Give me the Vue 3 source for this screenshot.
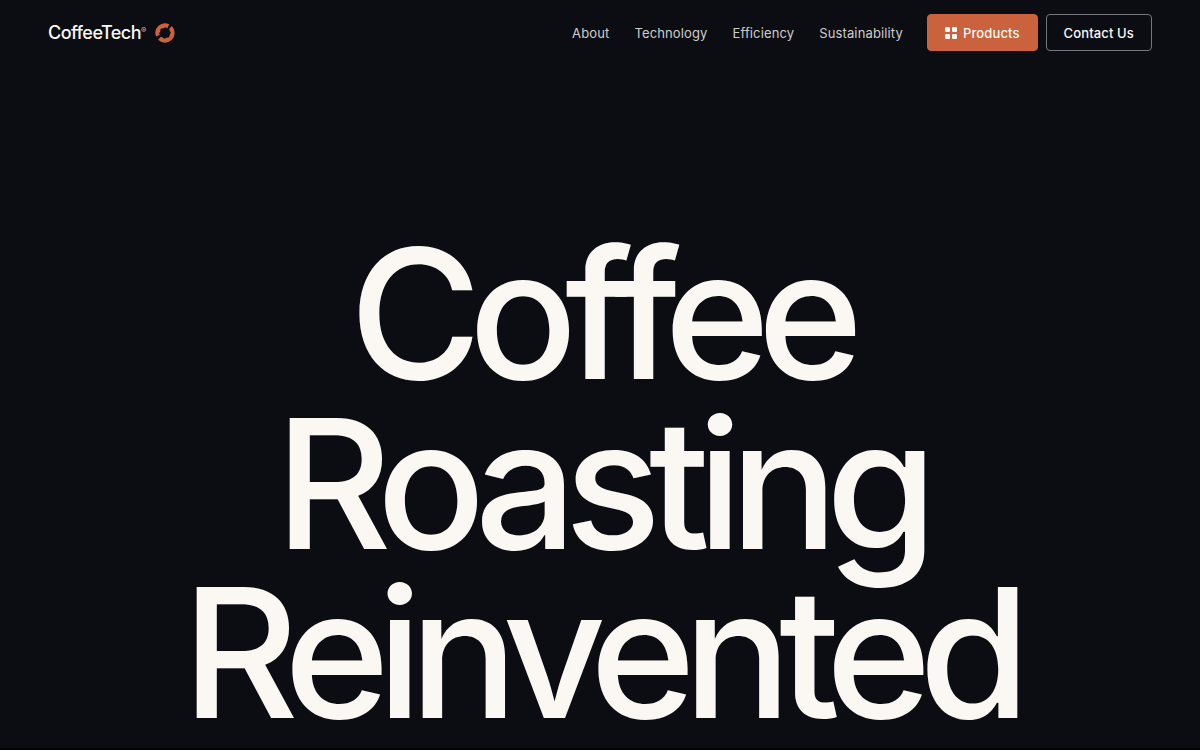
<script setup>
const links = ['About', 'Technology', 'Efficiency', 'Sustainability']
const lines = ['Coffee', 'Roasting', 'Reinvented']
</script>

<template>
  <div class="page">
    <header class="header">
      <a class="logo" href="#">
        <span class="name">CoffeeTech<sup>®</sup></span>
        <svg class="mark" viewBox="0 0 20 20" aria-hidden="true">
          <path d="M1 13.4A9.7 9.7 0 0 1 14.2 1.2L12.6 5.2 10.2 4.2 8.6 5.2 5.6 5.8 5.2 8.6 4.2 10.2 4.8 12Z" />
          <path d="M16.8 3A9.7 9.7 0 0 1 3 16.8L5.8 13.8 7.6 14.4 9.4 15.8 11.4 14.8 14.2 14.2 14.8 11.4 15.8 9.8 14.8 7.8 14 6Z" />
        </svg>
      </a>
      <nav class="nav">
        <a v-for="link in links" :key="link" href="#">{{ link }}</a>
      </nav>
      <div class="actions">
        <button class="btn primary" type="button">
          <svg class="grid" viewBox="0 0 12 12" aria-hidden="true">
            <rect width="5" height="5" rx="1" />
            <rect x="7" width="5" height="5" rx="1" />
            <rect y="7" width="5" height="5" rx="1" />
            <rect x="7" y="7" width="5" height="5" rx="1" />
          </svg>
          Products
        </button>
        <button class="btn outline" type="button">Contact Us</button>
      </div>
    </header>
    <main class="hero">
      <h1><span v-for="line in lines" :key="line">{{ line }}</span></h1>
    </main>
  </div>
</template>

<style>
body {
  background: #0c0d12;
}
</style>

<style scoped>
.page {
  display: flex;
  flex-direction: column;
  box-sizing: border-box;
  min-height: 100vh;
  border-bottom: 2px solid #030305;
  background: #0c0d12;
  color: #fbf8f3;
  font-family: Inter, sans-serif;
}
.header {
  display: flex;
  align-items: center;
  padding: 14px 48px;
}
.logo {
  display: flex;
  align-items: center;
  gap: 9px;
  margin-right: auto;
  color: inherit;
  text-decoration: none;
}
.name {
  font-size: 18px;
  font-weight: 500;
  line-height: 24px;
  letter-spacing: -0.03em;
}
.name sup {
  font-size: 8px;
  line-height: 0;
  vertical-align: 6px;
  opacity: 0.7;
}
.mark {
  width: 20px;
  height: 20px;
  fill: #ca623e;
}
.nav {
  display: flex;
  gap: 25px;
  margin-right: 24px;
}
.nav a {
  color: #d0cecb;
  font-size: 13px;
  line-height: 20px;
  letter-spacing: 0.01em;
  text-decoration: none;
}
.actions {
  display: flex;
  gap: 8px;
}
.btn {
  display: flex;
  align-items: center;
  gap: 6px;
  height: 37px;
  padding: 0 17px;
  border: 1px solid #75767a;
  border-radius: 4px;
  background: transparent;
  color: #fbf8f3;
  font: 500 13px/20px Inter, sans-serif;
  letter-spacing: 0.01em;
}
.primary {
  border-color: #ca623e;
  background: #ca623e;
}
.grid {
  width: 12px;
  height: 12px;
  fill: currentColor;
}
.hero {
  display: flex;
  flex: 1;
  flex-direction: column;
  align-items: center;
  justify-content: flex-end;
  padding: 0 24px 11px;
}
h1 {
  margin: 0;
  font-size: 15vw;
  font-weight: 500;
  line-height: 0.94;
  letter-spacing: -0.07em;
  text-align: center;
}
h1 span {
  display: block;
}
</style>
